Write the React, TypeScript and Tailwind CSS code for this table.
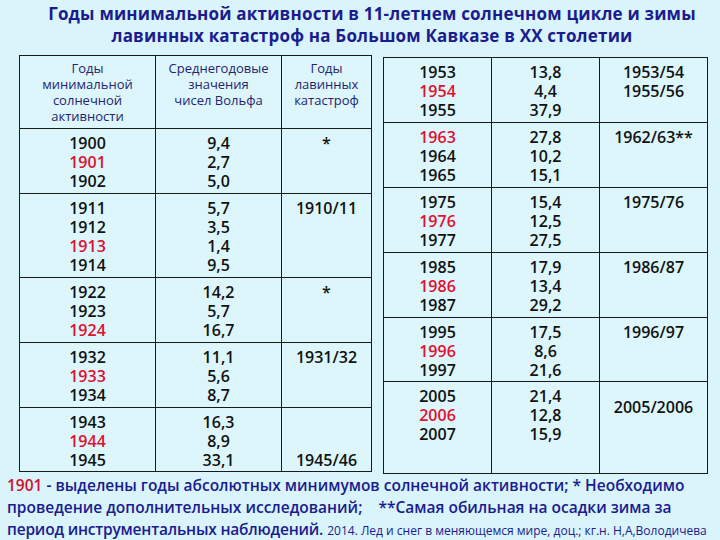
type Line = { t: string; red?: boolean };
type Row = { h: number; years: Line[]; wolf: string[]; aval: string[]; avalPad?: string };

const y = (s: string): Line => ({ t: s });
const r = (s: string): Line => ({ t: s, red: true });

const leftRows: Row[] = [
  { h: 65, years: [y("1900"), r("1901"), y("1902")], wolf: ["9,4", "2,7", "5,0"], aval: ["*"] },
  { h: 84, years: [y("1911"), y("1912"), r("1913"), y("1914")], wolf: ["5,7", "3,5", "1,4", "9,5"], aval: ["1910/11"] },
  { h: 65, years: [y("1922"), y("1923"), r("1924")], wolf: ["14,2", "5,7", "16,7"], aval: ["*"] },
  { h: 65, years: [y("1932"), r("1933"), y("1934")], wolf: ["11,1", "5,6", "8,7"], aval: ["1931/32"] },
  { h: 64, years: [y("1943"), r("1944"), y("1945")], wolf: ["16,3", "8,9", "33,1"], aval: ["\u00a0", "\u00a0", "1945/46"] },
];

const rightRows: Row[] = [
  { h: 65, years: [y("1953"), r("1954"), y("1955")], wolf: ["13,8", "4,4", "37,9"], aval: ["1953/54", "1955/56"] },
  { h: 65, years: [r("1963"), y("1964"), y("1965")], wolf: ["27,8", "10,2", "15,1"], aval: ["1962/63**"] },
  { h: 65, years: [y("1975"), r("1976"), y("1977")], wolf: ["15,4", "12,5", "27,5"], aval: ["1975/76"] },
  { h: 65, years: [y("1985"), r("1986"), y("1987")], wolf: ["17,9", "13,4", "29,2"], aval: ["1986/87"] },
  { h: 64, years: [y("1995"), r("1996"), y("1997")], wolf: ["17,5", "8,6", "21,6"], aval: ["1996/97"] },
  { h: 92, years: [y("2005"), r("2006"), y("2007")], wolf: ["21,4", "12,8", "15,9"], aval: ["2005/2006"], avalPad: "pt-[16px]" },
];

const num = "font-['Open_Sans',sans-serif] font-semibold text-[16px] leading-[19px] text-[#111]";
const cell = "border border-[#1a1a1a] align-top text-center pt-[5px]";

function DataRow({ row }: { row: Row }) {
  return (
    <tr style={{ height: row.h }}>
      <td className={cell}>
        <div className={num}>
          {row.years.map((l) => (
            <div key={l.t} className={l.red ? "text-[#e0102e]" : ""}>
              {l.t}
            </div>
          ))}
        </div>
      </td>
      <td className={cell}>
        <div className={`${num} whitespace-pre-line`}>{row.wolf.join("\n")}</div>
      </td>
      <td className={`${cell} ${row.avalPad ?? ""}`}>
        <div className={`${num} whitespace-pre-line`}>{row.aval.join("\n")}</div>
      </td>
    </tr>
  );
}

export default function App() {
  return (
    <div className="w-[720px] h-[540px] bg-[#d9f4fb] flex flex-col overflow-hidden font-['Open_Sans',sans-serif]">
      <div className="pt-[3px] pl-[24px] text-center text-[#1b1b8f] font-bold text-[17px] leading-[22px] tracking-[0.2px]">
        <div>Годы минимальной активности в 11-летнем солнечном цикле и зимы</div>
        <div>лавинных катастроф на Большом Кавказе в XX столетии</div>
      </div>

      <div className="flex items-start pl-[19px] gap-[11px] mt-[8px]">
        <table className="border-collapse table-fixed bg-[#dcf6fc]">
          <colgroup>
            <col className="w-[136px]" />
            <col className="w-[126px]" />
            <col className="w-[90px]" />
          </colgroup>
          <tbody>
            <tr className="h-[73px]">
              {[
                ["Годы", "минимальной", "солнечной", "активности"],
                ["Среднегодовые", "значения", "чисел Вольфа"],
                ["Годы", "лавинных", "катастроф"],
              ].map((lines, i) => (
                <td key={i} className="border border-[#1a1a1a] align-top text-center pt-[4px]">
                  <div className="text-[13px] leading-[16px] text-[#24246e] whitespace-pre-line">
                    {lines.join("\n")}
                  </div>
                </td>
              ))}
            </tr>
            {leftRows.map((row, i) => (
              <DataRow key={i} row={row} />
            ))}
          </tbody>
        </table>

        <table className="border-collapse table-fixed bg-[#dcf6fc] mt-[2px]">
          <colgroup>
            <col className="w-[108px]" />
            <col className="w-[108px]" />
            <col className="w-[108px]" />
          </colgroup>
          <tbody>
            {rightRows.map((row, i) => (
              <DataRow key={i} row={row} />
            ))}
          </tbody>
        </table>
      </div>

      <div className="pl-[7px] text-[#1b1b8f] font-semibold text-[15.5px] leading-[22px]">
        <div>
          <span className="text-[#d0102a]">1901</span> - выделены годы абсолютных минимумов солнечной активности; * Необходимо
        </div>
        <div>
          проведение дополнительных исследований;&nbsp;&nbsp;&nbsp;&nbsp;**Самая обильная на осадки зима за
        </div>
        <div className="whitespace-nowrap">
          <span className="tracking-[-0.2px]">период инструментальных наблюдений.</span>{" "}
          <span className="font-normal text-[12px]">2014. Лед и снег в меняющемся мире, доц.; кг.н. Н,А,Володичева</span>
        </div>
      </div>
    </div>
  );
}
